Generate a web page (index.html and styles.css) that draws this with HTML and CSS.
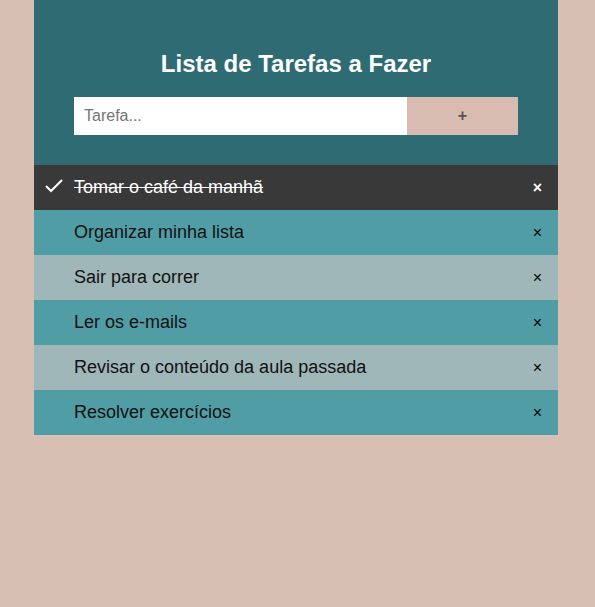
FILE: index.html
```html
<!DOCTYPE html>
<html lang="pt">
<head>
<meta charset="utf-8">
<title>Lista de Tarefas</title>
<link rel="stylesheet" href="styles.css">
</head>
<body>
<main class="app">
  <header class="header">
    <h2 class="title">Lista de Tarefas a Fazer</h2>
    <div class="form">
      <input class="field" type="text" placeholder="Tarefa...">
      <span class="add">+</span>
    </div>
  </header>
  <ul class="list">
    <li class="item checked">
      <svg class="check" width="20" height="16" viewBox="0 0 20 16"><polyline points="1,8 6,13 17,2" fill="none" stroke="#fff" stroke-width="2"/></svg>
      <span class="text">Tomar o café da manhã</span><span class="close">×</span>
    </li>
    <li class="item odd"><span class="text">Organizar minha lista</span><span class="close">×</span></li>
    <li class="item even"><span class="text">Sair para correr</span><span class="close">×</span></li>
    <li class="item odd"><span class="text">Ler os e-mails</span><span class="close">×</span></li>
    <li class="item even"><span class="text">Revisar o conteúdo da aula passada</span><span class="close">×</span></li>
    <li class="item odd"><span class="text">Resolver exercícios</span><span class="close">×</span></li>
  </ul>
</main>
</body>
</html>
```

FILE: styles.css
```css
* { box-sizing: border-box; }
html, body {
  margin: 0;
  padding: 0;
  background: #d8bfb4;
  font-family: "Liberation Sans", Arial, sans-serif;
}
.app {
  width: 524px;
  margin: 0 0 0 34px;
}
.header {
  background: #2f6b73;
  padding: 30px 40px;
  color: #fff;
  text-align: center;
}
.title {
  margin: 20px 0 20px;
  font-size: 24px;
  font-weight: bold;
  line-height: 27px;
}
.form {
  display: flex;
  height: 38px;
}
.field {
  flex: 0 0 333px;
  border: none;
  margin: 0;
  padding: 10px;
  font-family: "Liberation Sans", Arial, sans-serif;
  font-size: 16px;
  outline: none;
  background: #fff;
}
.field::placeholder { color: #757575; }
.add {
  flex: 1;
  background: #d8bcb1;
  color: #555;
  font-size: 16px;
  font-weight: bold;
  display: flex;
  align-items: center;
  justify-content: center;
}
.list {
  list-style: none;
  margin: 0;
  padding: 0;
}
.item {
  position: relative;
  display: flex;
  align-items: center;
  height: 45px;
  padding: 0 8px 0 40px;
  font-size: 18px;
  color: #111;
}
.odd { background: #519da6; }
.even { background: #9fb7b8; }
.checked {
  background: #393939;
  color: #fff;
}
.checked .text { text-decoration: line-through; }
.check {
  position: absolute;
  left: 11px;
  top: 13px;
}
.text { flex: 1; }
.close {
  font-size: 16px;
  padding: 0 16px 0 0;
  margin-right: -8px;
  color: #000;
}
.checked .close { color: #fff; font-weight: bold; }
```
